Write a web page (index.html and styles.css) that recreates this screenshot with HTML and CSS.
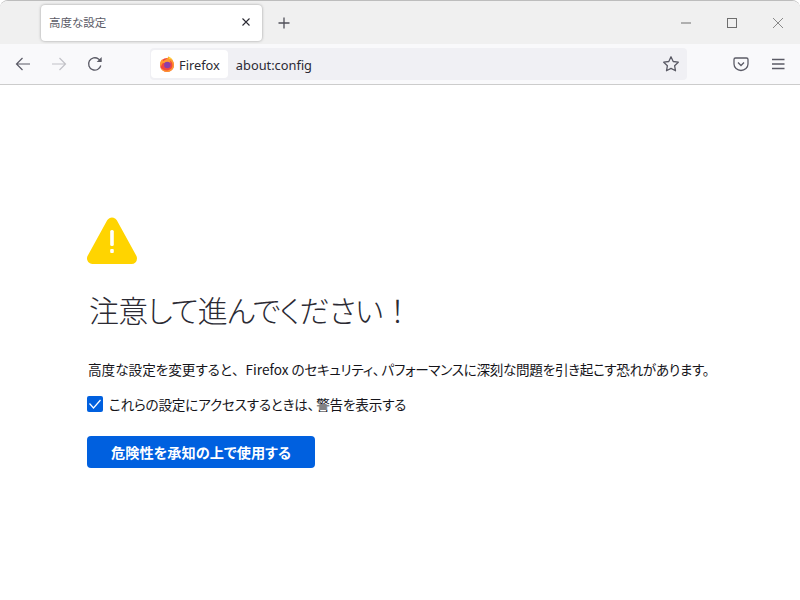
FILE: index.html
```html
<!DOCTYPE html>
<html lang="ja">
<head>
<meta charset="utf-8">
<title>高度な設定</title>
<link rel="stylesheet" href="styles.css">
</head>
<body>
<div class="window">
  <div class="tabbar">
    <div class="tab">
      <span class="tab-title">高度な設定</span>
      <svg class="tab-close" width="16" height="16" viewBox="0 0 16 16"><path d="M4.500 4.500l7 7M11.500 4.500l-7 7" stroke="#2b2a33" stroke-width="1.100" fill="none"/></svg>
    </div>
    <svg class="newtab" width="16" height="16" viewBox="0 0 16 16"><path d="M8 2.500v11M2.500 8h11" stroke="#4f4f58" stroke-width="1.300" fill="none"/></svg>
    <div class="spacer"></div>
    <div class="winctl">
      <svg width="12" height="12" viewBox="0 0 12 12"><path d="M1 6h10" stroke="#6e6e6e" stroke-width="1" fill="none"/></svg>
      <svg width="12" height="12" viewBox="0 0 12 12"><rect x="1.500" y="1.500" width="9" height="9" stroke="#6e6e6e" stroke-width="1" fill="none"/></svg>
      <svg width="12" height="12" viewBox="0 0 12 12"><path d="M1 1l10 10M11 1L1 11" stroke="#6e6e6e" stroke-width=".8" fill="none"/></svg>
    </div>
  </div>
  <div class="navbar">
    <svg class="nav-back" width="16" height="16" viewBox="0 0 16 16"><path d="M15 8H1.500M7.500 2L1.500 8l6 6" stroke="#5b5b66" stroke-width="1.200" fill="none"/></svg>
    <svg class="nav-fwd" width="16" height="16" viewBox="0 0 16 16"><path d="M1 8h13.500M8.500 2l6 6-6 6" stroke="#c2c2c7" stroke-width="1.200" fill="none"/></svg>
    <svg class="nav-reload" width="16" height="16" viewBox="0 0 16 16"><path d="M13.800 9.500A6.200 6.200 0 1 1 11.500 3L14 5" stroke="#5b5b66" stroke-width="1.300" fill="none"/><path d="M14.700 1v5h-5z" fill="#5b5b66"/></svg>
    <div class="urlbar">
      <div class="identity">
        <svg width="16" height="16" viewBox="0 0 16 16">
          <circle cx="8" cy="9" r="7" fill="#f0483e"/>
          <path d="M1 8.500C1 6 2 4 3.500 3c0 1 .4 1.700 1 2C6 3.500 8.500 3 9.500 .5 12.500 2 15 5 15 9c0 3.900-3.100 7-7 7-3.300 0-6-2.300-6.800-5.200 1 2 3.500 3.700 6.300 3.700 3.500 0 6-2.300 6-5.500 0-2.500-1.500-4-3-4.500.7.800 1 1.500 1 2.200L6 7c-.7.500-1.500-.5-2.500.5C2.500 8.500 2.500 10 1.500 11 1.200 10.300 1 9.400 1 8.500z" fill="#ff9a2e"/>
          <circle cx="8.300" cy="9" r="3.200" fill="#8a3fa8"/>
          <path d="M9.500 .5c2 1 3.500 2.200 4.500 4-1.200-1.200-2.600-1.700-4-1.500z" fill="#ffd23a"/>
        </svg>
        <span>Firefox</span>
      </div>
      <span class="url">about:config</span>
      <svg class="star" width="18" height="18" viewBox="0 0 18 18"><path d="M9 1.800l2.200 4.700 5.100.7-3.700 3.500.9 5.100L9 13.400l-4.500 2.400.9-5.100-3.700-3.500 5.100-.7z" stroke="#5b5b66" stroke-width="1.300" stroke-linejoin="round" fill="none"/></svg>
    </div>
    <svg class="pocket" width="16" height="16" viewBox="0 0 16 16"><path d="M2.500 2h11A1.500 1.500 0 0 1 15 3.500V8a7 6.500 0 0 1-14 0V3.500A1.500 1.500 0 0 1 2.500 2z" stroke="#5b5b66" stroke-width="1.300" fill="none"/><path d="M5 6.500l3 3 3-3" stroke="#5b5b66" stroke-width="1.300" fill="none"/></svg>
    <svg class="menu" width="14" height="12" viewBox="0 0 14 12"><path d="M1 1.500h12.500M1 6h12.500M1 10.500h12.500" stroke="#5b5b66" stroke-width="1.300" fill="none"/></svg>
  </div>
  <main class="content">
    <svg class="warn" width="50" height="47" viewBox="0 0 50 47"><path d="M25 6L5.500 41.500h39z" fill="#ffd400" stroke="#ffd400" stroke-width="11" stroke-linejoin="round"/><rect x="23.200" y="13" width="3.600" height="16" rx="1.500" fill="#fff"/><rect x="23.200" y="32" width="3.600" height="4" rx="1" fill="#fff"/></svg>
    <h1 class="title">注意して進んでください<span class="fullwidth">！</span></h1>
    <p class="desc">高度な設定を変更すると<span class="fullwidth">、</span>Firefox <span class="tail">のセキュリティ<span class="comma">、</span>パフォーマンスに深刻な問題を引き起こす恐れがあります。</span></p>
    <label class="check">
      <span class="box"><svg width="16" height="16" viewBox="0 0 16 16"><path d="M2.500 7.500L6.500 12 13.500 4" stroke="#fff" stroke-width="1.200" fill="none"/></svg></span>
      <span class="check-label">これらの設定にアクセスするときは<span class="comma">、</span>警告を表示する</span>
    </label>
    <button class="accept">危険性を承知の上で使用する</button>
  </main>
</div>
</body>
</html>
```
FILE: styles.css
```css
html, body { margin: 0; padding: 0; height: 100%; }
body { background: #fff; font-family: "Noto Sans CJK JP", "Noto Sans", sans-serif; overflow: hidden; }
.window { height: 600px; display: flex; flex-direction: column; border-top: 1px solid #bdbdbd; border-radius: 8px 8px 0 0; overflow: hidden; box-sizing: border-box; }
.tabbar { height: 43px; flex: none; background: #f0f0f0; display: flex; align-items: center; padding-left: 41px; box-sizing: border-box; }
.tab { width: 221px; height: 36px; background: #fff; border-radius: 4px; box-shadow: 0 0 3px rgba(0,0,0,.35); display: flex; align-items: center; padding: 0 8px 2px 8px; box-sizing: border-box; }
.tab-title { font-size: 11.500px; color: #5b5b66; flex: 1; font-feature-settings: "palt"; }
.tab-close { flex: none; }
.newtab { margin-left: 14px; }
.spacer { flex: 1; }
.winctl { display: flex; gap: 34px; padding-right: 16px; }
.navbar { height: 41px; flex: none; background: #f9f9fb; border-bottom: 1px solid #ccc; display: flex; align-items: center; box-sizing: border-box; padding-left: 15px; }
.nav-fwd { margin-left: 20px; }
.nav-reload { margin-left: 20px; }
.urlbar { margin-left: 47px; width: 537px; height: 32px; background: #f0f0f4; border-radius: 4px; display: flex; align-items: center; box-sizing: border-box; }
.identity { height: 28px; margin-left: 1px; background: #fff; border-radius: 4px; display: flex; align-items: center; gap: 4px; padding: 0 8px 0 8px; font-family: "Noto Sans", sans-serif; font-size: 12.800px; color: #2b2a33; }
.identity span { padding-top: 2px; }
.url { margin-left: 8px; padding-top: 2px; font-family: "Noto Sans", sans-serif; font-size: 12.800px; color: #2b2a33; flex: 1; }
.star { margin-right: 7px; }
.pocket { margin-left: 46px; }
.menu { margin-left: 22px; }
.content { flex: 1; padding: 132px 0 0 87px; }
.warn { display: block; }
.title { margin: 22px 0 0 2px; font-size: 30px; font-weight: 300; line-height: 46px; letter-spacing: -.8px; color: #2b2a33; font-feature-settings: "palt"; }
.fullwidth { font-feature-settings: normal; }
.comma { font-feature-settings: normal; letter-spacing: -5px; }
.desc { margin: 27px 0 0 1px; font-size: 13.600px; line-height: 20px; color: #15141a; white-space: nowrap; font-feature-settings: "palt"; }
.tail { letter-spacing: -.3px; }
.check { display: flex; align-items: center; gap: 6px; margin-top: 15px; font-size: 13.600px; line-height: 20px; color: #15141a; font-feature-settings: "palt"; }
.check-label { letter-spacing: -.2px; }
.box { width: 16px; height: 16px; background: #0060df; border-radius: 2px; display: block; }
.box svg { display: block; }
.accept { display: block; margin-top: 22px; width: 228px; height: 32px; border: 0; border-radius: 4px; background: #0060df; color: #fff; font-family: inherit; font-size: 14.200px; font-weight: 700; padding: 0; font-feature-settings: "palt"; }
```
